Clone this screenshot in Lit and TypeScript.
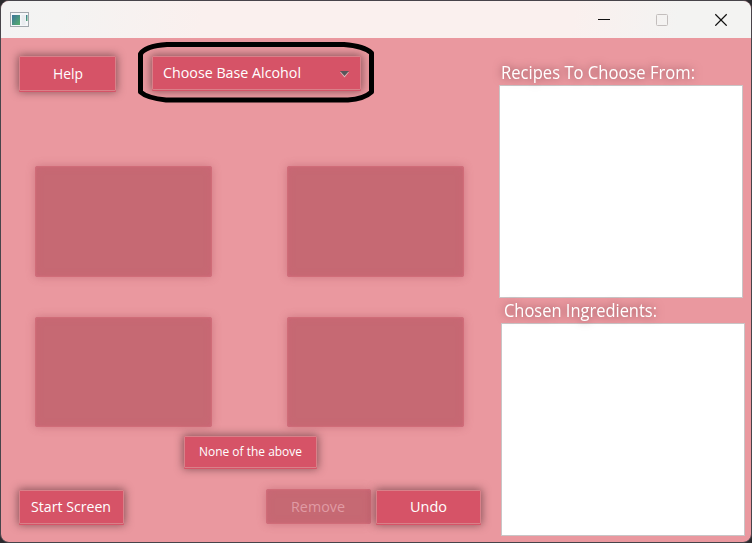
import { LitElement, html, css } from "lit";
import { customElement, property } from "lit/decorators.js";

// Single line of text fitted to a given width.
@customElement("fit-text")
class FitText extends LitElement {
  @property() text = "";
  @property({ type: Number }) width = 100;
  @property({ type: Number }) size = 15;
  static styles = css`
    :host { display: block; flex: none; }
    svg { display: block; overflow: visible; }
    text { fill: currentColor; font-family: "Open Sans", "Noto Sans", sans-serif; }
  `;
  render() {
    return html`<svg width=${this.width} height="20">
      <text x="0" y="15" font-size=${this.size} textLength=${this.width} lengthAdjust="spacingAndGlyphs">${this.text}</text>
    </svg>`;
  }
}

@customElement("app-root")
class AppRoot extends LitElement {
  static styles = css`
    :host { display: block; width: 752px; height: 543px; background: #2b2a2e; overflow: hidden; }
    * { box-sizing: border-box; }
    .window {
      width: 752px; height: 543px; border: 1px solid #47444a; border-radius: 9px;
      overflow: hidden; background: #ea989f; display: flex; flex-direction: column;
    }
    .titlebar {
      height: 37px; flex: none; display: flex; align-items: center; justify-content: space-between;
      background: linear-gradient(100deg, #f3f3f3 0, #f4f3f2 8%, #faf0ee 27%, #faf0ee 76%, #f3f3f2 90%, #f3f3f2);
    }
    .appicon { display: block; margin: -1px 0 0 9px; }
    .controls { display: block; margin: -1px 23px 0 0; }
    .content { display: flex; flex: 1; }
    .left { width: 498px; flex: none; display: flex; flex-direction: column; padding: 18px 0 0 18px; }
    .row { display: flex; }
    .top { gap: 36px; height: 35px; }
    .btn {
      display: flex; align-items: center; justify-content: center; color: #fff;
      background: #d65367; border: 1px solid #d98089; border-radius: 1px;
      width: 105px; height: 34px;
      box-shadow: 0 1px 0 #d65367, 0 0 9px 1px rgba(70, 35, 40, .6);
    }
    .help { width: 97px; height: 35px; }
    .combo { width: 209px; height: 34px; justify-content: space-between; padding: 0 11px 0 10px; position: relative; }
    .ring { position: absolute; left: -15px; top: -15px; }
    .arrow { display: block; margin-top: 2px; }
    .tiles {
      display: grid; grid-template-columns: 177px 177px; grid-auto-rows: 110.5px;
      gap: 40px 75px; margin: 75px 0 0 16px;
    }
    .tile {
      background: #c66973; border-radius: 3px;
      box-shadow: 0 0 9px rgba(165, 75, 88, .42), inset 0 0 2px 1px #d26e7b, inset 0 0 8px #cb6676;
    }
    .none { width: 133px; height: 32px; margin: 9px 0 0 165px; padding-bottom: 2px; }
    .bottom { margin-top: 22px; }
    .bottom fit-text { margin-left: -1px; }
    .remove {
      width: 105px; height: 35px; margin: -1px 5px 0 142px; display: flex; align-items: center;
      justify-content: center; color: #e09ba4;
    }
    .right { padding-top: 24px; display: flex; flex-direction: column; }
    .heading { color: #fff; height: 24px; padding: 2px 0 0 2px; filter: drop-shadow(0 0 4px rgba(80, 25, 35, .65)); }
    .list { width: 244px; height: 213px; margin-top: -1px; background: #fff; border: 1px solid #c9c5c6; }
    .second { padding: 4px 0 0 5px; height: 26px; }
    .chosen { margin-left: 2px; }
  `;
  render() {
    return html`
      <div class="window">
        <div class="titlebar">
          <svg class="appicon" width="19" height="15" viewBox="0 0 19 15">
            <defs>
              <linearGradient id="g" x1="0" y1="0" x2="1" y2="1">
                <stop offset="0" stop-color="#3c739a" /><stop offset="1" stop-color="#55b06b" />
              </linearGradient>
            </defs>
            <rect x=".5" y=".5" width="18" height="14" fill="#f5f7f9" stroke="#a2a8ad" />
            <rect x="2" y="3" width="8" height="10" fill="url(#g)" />
            <rect x="11.5" y="3" width="4" height="10" fill="#e9ecef" />
            <rect x="16" y="3" width="1.5" height="6" fill="url(#g)" />
          </svg>
          <svg class="controls" width="130" height="14" viewBox="0 0 130 14">
            <path d="M0 7.500h12" stroke="#111" />
            <rect x="58.500" y="2.500" width="11" height="11" rx="1" fill="none" stroke="#c3bebd" />
            <path d="M117.300 2.300l11.400 11.400M128.700 2.300l-11.400 11.400" stroke="#111" stroke-width="1.25" />
          </svg>
        </div>
        <div class="content">
          <div class="left">
            <div class="row top">
              <div class="btn help"><fit-text text="Help" width="30"></fit-text></div>
              <div class="btn combo">
                <fit-text text="Choose Base Alcohol" width="138"></fit-text>
                <svg class="arrow" width="9" height="7" viewBox="0 0 9 7">
                  <path d="M0 1h9L4.500 6.500z" fill="#dfb8ba" /><path d="M0 0h9L4.500 5z" fill="#58565a" />
                </svg>
                <svg class="ring" width="236" height="61" viewBox="0 0 236 61">
                  <path d="M29 2.500H206Q226 4 233.500 11V50Q226 57 210 58H28Q9 56 2.500 50V12Q7 4 29 2.500Z"
                    fill="none" stroke="#000" stroke-width="5" stroke-linejoin="round" />
                </svg>
              </div>
            </div>
            <div class="tiles">${[0, 1, 2, 3].map(() => html`<div class="tile"></div>`)}</div>
            <div class="btn none"><fit-text text="None of the above" width="103" size="12.5"></fit-text></div>
            <div class="row bottom">
              <div class="btn"><fit-text text="Start Screen" width="80"></fit-text></div>
              <div class="tile remove"><fit-text text="Remove" width="54"></fit-text></div>
              <div class="btn"><fit-text text="Undo" width="37"></fit-text></div>
            </div>
          </div>
          <div class="right">
            <div class="heading"><fit-text text="Recipes To Choose From:" width="194" size="17.5"></fit-text></div>
            <div class="list"></div>
            <div class="heading second"><fit-text text="Chosen Ingredients:" width="153" size="17.5"></fit-text></div>
            <div class="list chosen"></div>
          </div>
        </div>
      </div>`;
  }
}
